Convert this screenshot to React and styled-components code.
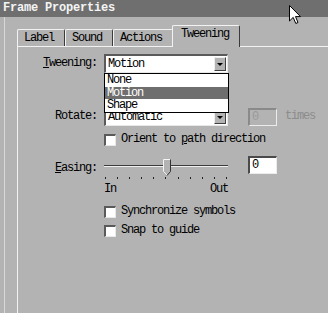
import React from 'react';
import styled, { createGlobalStyle } from 'styled-components';

const GlobalStyle = createGlobalStyle`
  html, body {
    margin: 0;
    padding: 0;
    background: #b3b3b3;
  }
  body {
    font-family: "Liberation Mono", "DejaVu Sans Mono", monospace;
  }
`;

const Window = styled.div`
  position: relative;
  width: 328px;
  height: 313px;
  overflow: hidden;
  background: #b3b3b3;
  display: flex;
  flex-direction: column;
  color: #000;
  font-size: 12px;
  line-height: 13px;
  letter-spacing: -1.2px;
`;

const TitleBar = styled.div`
  height: 17px;
  flex-shrink: 0;
  background: #6f6f6f;
  color: #f4f4f4;
  font-weight: bold;
  font-size: 12px;
  letter-spacing: -0.2px;
  padding-left: 3px;
  display: flex;
  align-items: center;
`;

const Body = styled.div`
  flex: 1;
  display: flex;
  flex-direction: column;
  margin-left: 4px;
  border-left: 1px solid #d8d8d8;
  padding: 8px 0 0 12px;
`;

const TabStrip = styled.div`
  display: flex;
  align-items: flex-end;
  height: 21px;
  position: relative;
  z-index: 1;
`;

const Tab = styled.div`
  box-sizing: border-box;
  height: ${(p) => (p.active ? '22px' : '17px')};
  margin-bottom: ${(p) => (p.active ? '-1px' : '0')};
  margin-left: ${(p) => (p.active ? '-1px' : '0')};
  padding: ${(p) => (p.active ? '0 10px 0 8px' : '0 10px 0 6px')};
  padding-bottom: ${(p) => (p.active ? '4px' : '0')};
  background: #b3b3b3;
  border-top: 1px solid #f2f2f2;
  border-left: 1px solid #f2f2f2;
  border-right: 1px solid #3a3a3a;
  border-radius: 2px 2px 0 0;
  display: flex;
  align-items: center;
`;

const Panel = styled.div`
  flex: 1;
  border-top: 1px solid #f2f2f2;
  border-left: 1px solid #f2f2f2;
  padding-top: 7px;
  display: flex;
  flex-direction: column;
`;

const Row = styled.div`
  display: flex;
  align-items: ${(p) => (p.top ? 'flex-start' : 'center')};
  margin-top: ${(p) => p.mt || 0}px;
`;

const Label = styled.div`
  width: 79px;
  margin-right: 7px;
  text-align: right;
  flex-shrink: 0;
  padding-top: ${(p) => p.pt || 0}px;
`;

const U = styled.span`
  text-decoration: underline;
`;

const SelectWrap = styled.div`
  position: relative;
`;

const Select = styled.div`
  box-sizing: border-box;
  width: 124px;
  height: 19px;
  background: #fff;
  border-top: 2px solid #5a5a5a;
  border-left: 2px solid #5a5a5a;
  border-right: 1px solid #e8e8e8;
  border-bottom: 1px solid #e8e8e8;
  display: flex;
  align-items: center;
  padding-left: 2px;
  justify-content: space-between;
`;

const ArrowButton = styled.div`
  width: 12px;
  height: 14px;
  margin-right: 1px;
  box-sizing: border-box;
  background: #b3b3b3;
  border-top: 1px solid #eee;
  border-left: 1px solid #eee;
  border-right: 1px solid #404040;
  border-bottom: 1px solid #404040;
  display: flex;
  align-items: center;
  justify-content: center;
  &::after {
    content: '';
    border-left: 3px solid transparent;
    border-right: 3px solid transparent;
    border-top: 3px solid #000;
  }
`;

const DropList = styled.div`
  position: absolute;
  left: 0;
  top: 19px;
  width: 125px;
  box-sizing: border-box;
  background: #fff;
  border: 1px solid #000;
  z-index: 2;
`;

const DropItem = styled.div`
  height: 12.5px;
  line-height: 12.5px;
  padding-left: 2px;
  background: ${(p) => (p.selected ? '#6e6e6e' : '#fff')};
  color: ${(p) => (p.selected ? '#fff' : '#000')};
`;

const Field = styled.div`
  box-sizing: border-box;
  width: 29px;
  height: 18px;
  margin-left: 20px;
  background: ${(p) => (p.disabled ? '#b3b3b3' : '#fff')};
  color: ${(p) => (p.disabled ? '#9a9a9a' : '#000')};
  border-top: 2px solid ${(p) => (p.disabled ? '#8a8a8a' : '#4a4a4a')};
  border-left: 2px solid ${(p) => (p.disabled ? '#8a8a8a' : '#4a4a4a')};
  border-right: 1px solid #ececec;
  border-bottom: 1px solid #ececec;
  padding-left: 2px;
  display: flex;
  align-items: center;
`;

const Muted = styled.span`
  margin-left: 8px;
  color: #8c8c8c;
`;

const CheckRow = styled.div`
  display: flex;
  align-items: center;
  padding-left: 86px;
  margin-top: ${(p) => p.mt || 0}px;
`;

const Box = styled.div`
  box-sizing: border-box;
  width: 12px;
  height: 12px;
  background: #fff;
  border-top: 2px solid #5a5a5a;
  border-left: 2px solid #5a5a5a;
  border-right: 1px solid #e8e8e8;
  border-bottom: 1px solid #e8e8e8;
  margin-right: 5px;
`;

const SliderBox = styled.div`
  position: relative;
  width: 124px;
  height: 39px;
`;

const Track = styled.div`
  position: absolute;
  left: 0;
  right: 0;
  top: 9px;
  border-top: 1px solid #3c3c3c;
  border-bottom: 1px solid #f0f0f0;
`;

const Ticks = styled.div`
  position: absolute;
  left: 1px;
  right: 1px;
  top: 21px;
  display: flex;
  justify-content: space-between;
`;

const Tick = styled.div`
  width: 1px;
  height: 2px;
  background: #222;
`;

const Scale = styled.div`
  position: absolute;
  left: 0;
  right: 0;
  top: 27px;
  display: flex;
  justify-content: space-between;
`;

const Thumb = styled.svg`
  position: absolute;
  left: 59px;
  top: 3px;
`;

const Cursor = styled.svg`
  position: absolute;
  left: 289px;
  top: 5px;
`;

export default function App() {
  return (
    <>
      <GlobalStyle />
      <Window>
        <TitleBar>Frame Properties</TitleBar>
        <Body>
          <TabStrip>
            <Tab>Label</Tab>
            <Tab>Sound</Tab>
            <Tab>Actions</Tab>
            <Tab active>Tweening</Tab>
          </TabStrip>
          <Panel>
            <Row>
              <Label>
                <U>T</U>weening:
              </Label>
              <SelectWrap>
                <Select>
                  Motion
                  <ArrowButton />
                </Select>
                <DropList>
                  <DropItem>None</DropItem>
                  <DropItem selected>Motion</DropItem>
                  <DropItem>Shape</DropItem>
                </DropList>
              </SelectWrap>
            </Row>

            <Row mt={34}>
              <Label>Rotate:</Label>
              <Select>
                Automatic
                <ArrowButton />
              </Select>
              <Field disabled>0</Field>
              <Muted>times</Muted>
            </Row>

            <CheckRow mt={7}>
              <Box />
              <span>
                Orient to <U>p</U>ath direction
              </span>
            </CheckRow>

            <Row top mt={10}>
              <Label pt={6}>
                <U>E</U>asing:
              </Label>
              <SliderBox>
                <Track />
                <Thumb width="8" height="17" viewBox="0 0 8 17">
                  <path d="M0.5 0.5 H7.5 V12.5 L4 16.5 L0.5 12.5 Z" fill="#b3b3b3" />
                  <path d="M0.5 12.5 V0.5 H7" fill="none" stroke="#f4f4f4" />
                  <path d="M7.5 0.5 V12.5 L4 16.5" fill="none" stroke="#333" />
                  <path d="M0.5 12.5 L4 16" fill="none" stroke="#eee" />
                </Thumb>
                <Ticks>
                  {Array.from({ length: 11 }).map((_, i) => (
                    <Tick key={i} />
                  ))}
                </Ticks>
                <Scale>
                  <span>In</span>
                  <span>Out</span>
                </Scale>
              </SliderBox>
              <Field>0</Field>
            </Row>

            <CheckRow mt={10}>
              <Box />
              <span>Synchronize symbols</span>
            </CheckRow>
            <CheckRow mt={6}>
              <Box />
              <span>Snap to guide</span>
            </CheckRow>
          </Panel>
        </Body>
        <Cursor width="13" height="20" viewBox="0 0 13 20">
          <path
            d="M0.5 0.5 V16 L4.2 12.4 L6.8 18.5 L9 17.5 L6.5 11.6 H11.5 Z"
            fill="#fff"
            stroke="#000"
            strokeWidth="1"
          />
        </Cursor>
      </Window>
    </>
  );
}
